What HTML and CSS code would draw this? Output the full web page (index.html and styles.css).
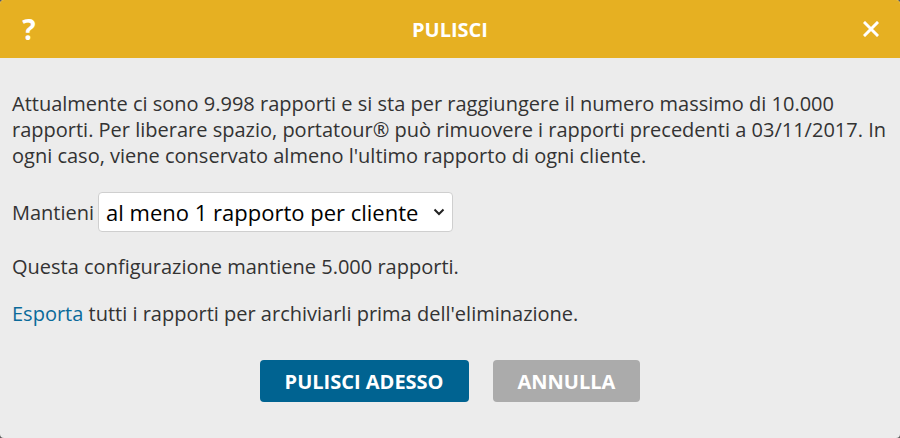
FILE: index.html
```
<!DOCTYPE html>
<html lang="it">
<head>
    <meta charset="UTF-8">
    <meta name="viewport" content="width=device-width, initial-scale=1.0">
    <title>Pulisci</title>
    <link rel="stylesheet" href="styles.css">
</head>
<body>
    <div class="dialog">
        <div class="dialog-header">
            <span class="header-icon help">?</span>
            <h2>PULISCI</h2>
            <span class="header-icon close">
                <svg width="16" height="16" viewBox="0 0 16 16">
                    <path d="M2 2 L14 14 M14 2 L2 14" stroke="#fff" stroke-width="3" stroke-linecap="square"/>
                </svg>
            </span>
        </div>

        <div class="dialog-body">
            <p class="intro">Attualmente ci sono 9.998 rapporti e si sta per raggiungere il numero massimo di 10.000 rapporti. Per liberare spazio, portatour® può rimuovere i rapporti precedenti a 03/11/2017. In ogni caso, viene conservato almeno l'ultimo rapporto di ogni cliente.</p>

            <div class="keep-row">
                <label for="keep">Mantieni</label>
                <div class="select-box">
                    <select id="keep">
                        <option>al meno 1 rapporto per cliente</option>
                    </select>
                    <svg class="chevron" width="12" height="8" viewBox="0 0 12 8">
                        <path d="M1.5 1.5 L6 6 L10.5 1.5" fill="none" stroke="#222" stroke-width="2"/>
                    </svg>
                </div>
            </div>

            <p class="info">Questa configurazione mantiene 5.000 rapporti.</p>

            <p class="info export"><a href="#">Esporta</a> tutti i rapporti per archiviarli prima dell'eliminazione.</p>

            <div class="buttons">
                <button class="btn btn-primary">PULISCI ADESSO</button>
                <button class="btn btn-cancel">ANNULLA</button>
            </div>
        </div>
    </div>
</body>
</html>
```

FILE: styles.css
```
html {
    background-color: #5a5a5a;
}

body {
    margin: 0;
    font-family: "Open Sans", Arial, sans-serif;
    color: #333;
}

.dialog {
    width: 900px;
    height: 438px;
    background-color: #ececec;
    border-radius: 4px;
    overflow: hidden;
}

.dialog-header {
    height: 58px;
    background-color: #e6b022;
    display: flex;
    align-items: center;
    justify-content: space-between;
    padding: 0 21px 0 21px;
    color: #fff;
}

.dialog-header h2 {
    margin: 0;
    font-size: 20px;
    font-weight: 700;
}

.header-icon {
    width: 16px;
    display: flex;
    align-items: center;
    justify-content: center;
}

.help {
    font-size: 28px;
    font-weight: 700;
    line-height: 1;
}

.dialog-body {
    padding: 0 12px;
}

.intro {
    margin: 33px 0 0;
    font-size: 20px;
    line-height: 26px;
}

.keep-row {
    margin-top: 23px;
    display: flex;
    align-items: center;
    gap: 4px;
    font-size: 20px;
}

.select-box {
    position: relative;
}

select {
    appearance: none;
    width: 355px;
    height: 40px;
    padding: 0 30px 0 7px;
    font-family: "Open Sans", Arial, sans-serif;
    font-size: 22px;
    color: #000;
    background-color: #fff;
    border: 1px solid #cfcfcf;
    border-radius: 4px;
}

.chevron {
    position: absolute;
    right: 8px;
    top: 16px;
    pointer-events: none;
}

.info {
    margin: 22px 0 0;
    font-size: 20px;
    line-height: 26px;
}

.export {
    margin-top: 21px;
}

.export a {
    color: #0a6a9a;
    text-decoration: none;
}

.buttons {
    margin-top: 33px;
    display: flex;
    justify-content: center;
    gap: 24px;
}

.btn {
    height: 42px;
    border: none;
    border-radius: 4px;
    font-family: "Open Sans", Arial, sans-serif;
    font-size: 20px;
    font-weight: 700;
    color: #fff;
    padding: 0 25px;
}

.btn-primary {
    background-color: #006391;
}

.btn-cancel {
    background-color: #ababab;
}
```
